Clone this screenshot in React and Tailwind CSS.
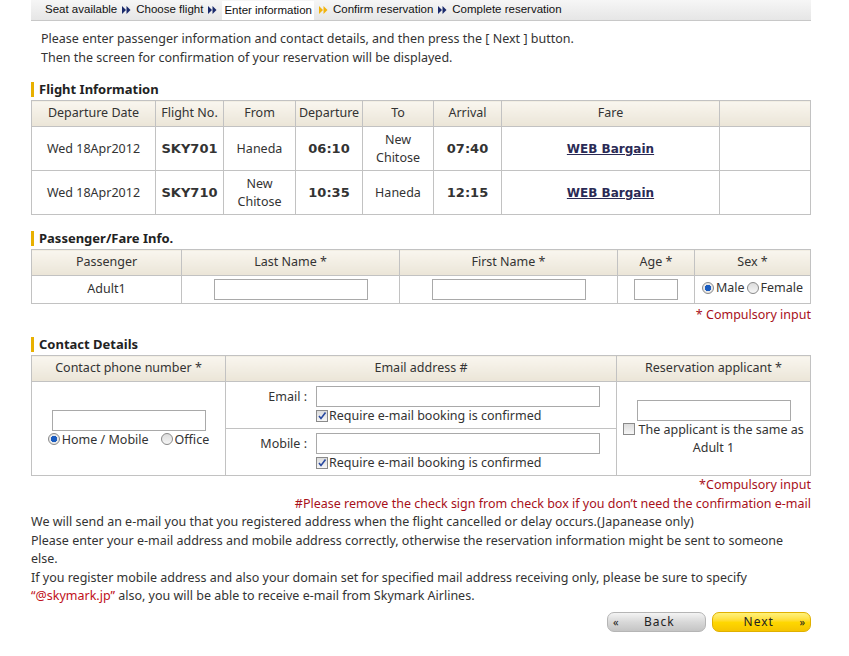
import { useState } from 'react';

const font = { fontFamily: '"Noto Sans", "Liberation Sans", sans-serif' };
const wide = { fontFamily: '"DejaVu Sans", Verdana, sans-serif' };

function Arrows({ active }) {
  return (
    <svg width="9" height="8" viewBox="0 0 9 8" className="mx-[5px] inline-block">
      <path d="M0 0 L4 4 L0 8 Z M4.5 0 L8.5 4 L4.5 8 Z" fill={active ? '#f2b30c' : '#1a2a6c'} />
    </svg>
  );
}

function Heading({ children }) {
  return (
    <div className="flex h-[19px] items-center gap-[5px] pb-[3px]">
      <span className="h-[15px] w-[3px] bg-[#e8b000]" />
      <span className="text-[13px] font-bold leading-[16px] text-[#222]">{children}</span>
    </div>
  );
}

const th = 'border border-[#c2c2c2] bg-gradient-to-b from-[#f9f6ef] to-[#ebe5d7] font-normal text-[#333]';
const td = 'border border-[#c2c2c2] text-[#333]';
const input = 'h-[21px] border border-[#a9a9a9] bg-white';

function Radio({ checked }) {
  return (
    <span
      className={`inline-block h-[12px] w-[12px] shrink-0 rounded-full border border-[#8a8a8a] ${
        checked ? 'bg-[radial-gradient(circle,#1a5cc0_0,#1a5cc0_3px,#e8e8e8_3.5px)]' : 'bg-gradient-to-b from-[#dcdcdc] to-[#f6f6f6]'
      }`}
    />
  );
}

function Check({ checked }) {
  return (
    <span className="inline-flex h-[12px] w-[12px] shrink-0 items-center justify-center border border-[#8a8a8a] bg-gradient-to-b from-[#dcdcdc] to-[#f6f6f6] align-[-1px]">
      {checked && (
        <svg width="10" height="10" viewBox="0 0 10 10">
          <path d="M2 5 L4 7.5 L8.5 1.5" stroke="#2a4aa0" strokeWidth="1.6" fill="none" />
        </svg>
      )}
    </span>
  );
}

const flights = [
  { date: 'Wed 18Apr2012', no: 'SKY701', from: 'Haneda', dep: '06:10', to: ['New', 'Chitose'], arr: '07:40' },
  { date: 'Wed 18Apr2012', no: 'SKY710', from: ['New', 'Chitose'], dep: '10:35', to: 'Haneda', arr: '12:15' },
];

function Place({ v }) {
  if (Array.isArray(v)) return <>{v[0]}<br />{v[1]}</>;
  return v;
}

function MailRow({ label, last }) {
  return (
    <div className={`flex pb-[3px] pt-[4px] ${last ? '' : 'border-b border-[#c2c2c2]'}`}>
      <div className="w-[81px] pt-[2px] text-right">{label}</div>
      <div className="pl-[9px] text-left">
        <input className={`${input} block w-[284px]`} />
        <div className="flex items-center gap-[1px] leading-[18px]">
          <Check checked />Require e-mail booking is confirmed
        </div>
      </div>
    </div>
  );
}

export default function App() {
  const [sex] = useState('male');
  return (
    <div className="min-h-screen bg-white text-[12.5px] text-[#333]" style={font}>
      <div className="mx-[31px] w-[780px]">
        <div
          className="flex h-[21px] items-center border-b border-[#c8c8c8] bg-gradient-to-b from-[#f6f6f6] to-[#e6e6e6] pl-[14px] text-[11.5px] text-[#111]"
          style={{ fontFamily: '"Liberation Sans", Arial, sans-serif' }}
        >
          <span>Seat available</span>
          <Arrows />
          <span>Choose flight</span>
          <Arrows />
          <span className="bg-white px-[2px] leading-[19px]">Enter information</span>
          <Arrows active />
          <span>Confirm reservation</span>
          <Arrows />
          <span>Complete reservation</span>
        </div>

        <p className="mt-[8px] pl-[10px] leading-[19px] text-[#333]">
          Please enter passenger information and contact details, and then press the [ Next ] button.
          <br />
          Then the screen for confirmation of your reservation will be displayed.
        </p>

        <div className="mt-[14px]">
          <Heading>Flight Information</Heading>
          <table className="w-full border-collapse text-center">
            <thead>
              <tr className="h-[26px]">
                <th className={`${th} w-[124px]`}>Departure Date</th>
                <th className={`${th} w-[68px]`}>Flight No.</th>
                <th className={`${th} w-[72px]`}>From</th>
                <th className={`${th} w-[67px]`}>Departure</th>
                <th className={`${th} w-[71px]`}>To</th>
                <th className={`${th} w-[68px]`}>Arrival</th>
                <th className={`${th} w-[218px]`}>Fare</th>
                <th className={th}></th>
              </tr>
            </thead>
            <tbody>
              {flights.map((f) => (
                <tr key={f.no} className="h-[44px] leading-[18px]">
                  <td className={td}>{f.date}</td>
                  <td className={`${td} text-[13px] font-bold text-[#222]`} style={wide}>{f.no}</td>
                  <td className={td}><Place v={f.from} /></td>
                  <td className={`${td} text-[13px] font-bold text-[#222]`} style={wide}>{f.dep}</td>
                  <td className={td}><Place v={f.to} /></td>
                  <td className={`${td} text-[13px] font-bold text-[#222]`} style={wide}>{f.arr}</td>
                  <td className={td}>
                    <a href="#" className="text-[12px] font-bold text-[#2a2a55] underline" style={wide}>WEB Bargain</a>
                  </td>
                  <td className={td}></td>
                </tr>
              ))}
            </tbody>
          </table>
        </div>

        <div className="mt-[15px]">
          <Heading>Passenger/Fare Info.</Heading>
          <table className="w-full border-collapse text-center">
            <thead>
              <tr className="h-[26px]">
                <th className={`${th} w-[150px]`}>Passenger</th>
                <th className={`${th} w-[218px]`}>Last Name *</th>
                <th className={`${th} w-[218px]`}>First Name *</th>
                <th className={`${th} w-[77px]`}>Age *</th>
                <th className={th}>Sex *</th>
              </tr>
            </thead>
            <tbody>
              <tr className="h-[28px]">
                <td className={td}>Adult1</td>
                <td className={td}><input className={`${input} w-[154px] align-middle`} /></td>
                <td className={td}><input className={`${input} w-[154px] align-middle`} /></td>
                <td className={td}><input className={`${input} w-[44px] align-middle`} /></td>
                <td className={td}>
                  <span className="inline-flex items-center gap-[2px]">
                    <Radio checked={sex === 'male'} />Male <Radio checked={sex === 'female'} />Female
                  </span>
                </td>
              </tr>
            </tbody>
          </table>
          <p className="mt-[1px] text-right leading-[19px] text-[#a8101a]">* Compulsory input</p>
        </div>

        <div className="mt-[12px]">
          <Heading>Contact Details</Heading>
          <table className="w-full border-collapse text-center">
            <thead>
              <tr className="h-[26px]">
                <th className={`${th} w-[194px]`}>Contact phone number *</th>
                <th className={`${th} w-[391px]`}>Email address #</th>
                <th className={th}>Reservation applicant *</th>
              </tr>
            </thead>
            <tbody>
              <tr>
                <td className={td}>
                  <input className={`${input} w-[154px]`} />
                  <div className="flex items-center justify-center gap-[2px] leading-[17px]">
                    <Radio checked />Home / Mobile<span className="w-[8px]" />
                    <Radio />Office
                  </div>
                </td>
                <td className="border border-[#c2c2c2] p-0">
                  <MailRow label="Email :" />
                  <MailRow label="Mobile :" last />
                </td>
                <td className={td}>
                  <input className={`${input} w-[154px]`} />
                  <div className="leading-[18px]">
                    <Check /> The applicant is the same as
                    <br />
                    Adult 1
                  </div>
                </td>
              </tr>
            </tbody>
          </table>
          <p className="text-right leading-[18.5px] text-[#a8101a]">*Compulsory input</p>
          <p className="text-right leading-[18.5px] text-[#a8101a]">
            #Please remove the check sign from check box if you don’t need the confirmation e-mail
          </p>
        </div>

        <div className="leading-[18.6px] text-[#333]">
          <p>We will send an e-mail you that you registered address when the flight cancelled or delay occurs.(Japanease only)</p>
          <p>Please enter your e-mail address and mobile address correctly, otherwise the reservation information might be sent to someone else.</p>
          <p>
            If you register mobile address and also your domain set for specified mail address receiving only, please be sure to specify
            <br />
            <span className="text-[#c0101a]">“@skymark.jp”</span> also, you will be able to receive e-mail from Skymark Airlines.
          </p>
        </div>

        <div className="mt-[6px] flex justify-end gap-[6px]">
          <button className="flex h-[20px] w-[99px] items-center rounded-[7px] border border-[#b5b5b5] bg-gradient-to-b from-[#f4f4f4] via-[#d8d8d8] to-[#c4c4c4] px-[5px] text-[12px] text-[#222]">
            <span className="text-[11px]">«</span>
            <span className="flex-1 tracking-[1px]">Back</span>
          </button>
          <button className="flex h-[20px] w-[99px] items-center rounded-[7px] border border-[#e0b000] bg-gradient-to-b from-[#fff27a] via-[#ffd800] to-[#f5c400] px-[5px] text-[12px] text-[#222]">
            <span className="flex-1 tracking-[1px]">Next</span>
            <span className="text-[11px]">»</span>
          </button>
        </div>
      </div>
    </div>
  );
}
